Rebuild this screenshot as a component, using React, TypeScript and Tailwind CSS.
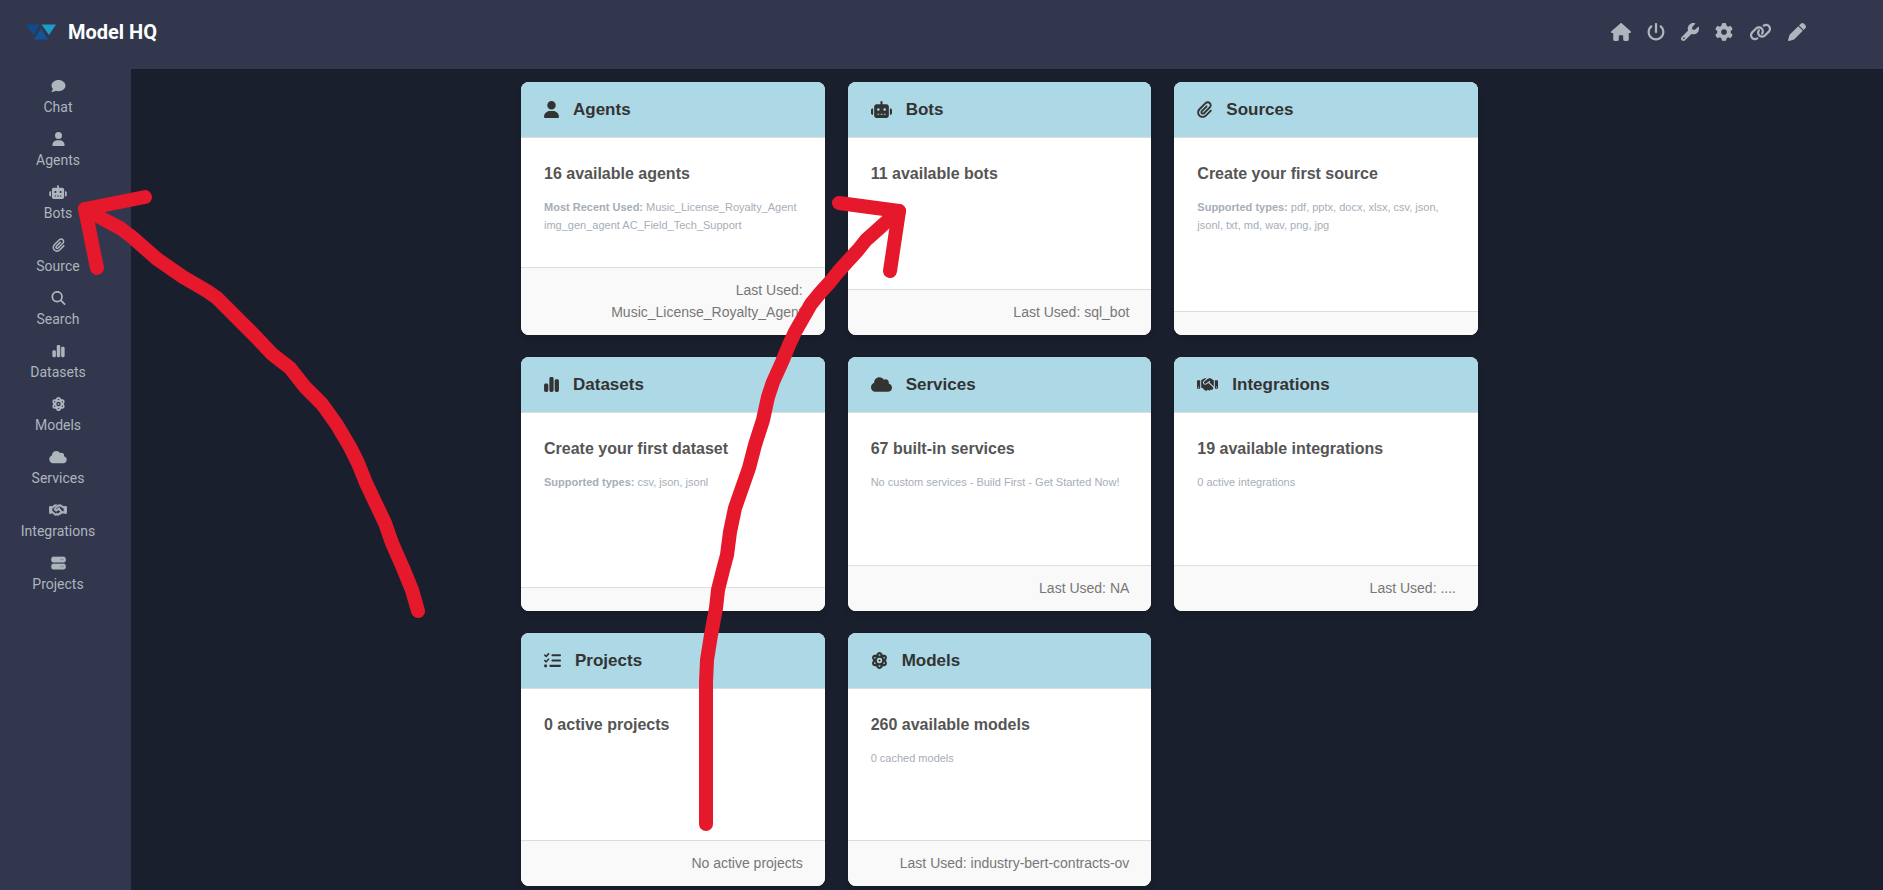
import type { ReactNode } from 'react'
import type { IconType } from 'react-icons'
import {
  FaAtom,
  FaChartSimple,
  FaCloud,
  FaComment,
  FaGear,
  FaHandshake,
  FaHouse,
  FaLink,
  FaListCheck,
  FaMagnifyingGlass,
  FaPaperclip,
  FaPen,
  FaPowerOff,
  FaRegHandshake,
  FaRobot,
  FaServer,
  FaUser,
  FaWrench,
} from 'react-icons/fa6'

const toolbar: { label: string; icon: IconType; width: string }[] = [
  { label: 'Home', icon: FaHouse, width: 'w-[20px]' },
  { label: 'Power', icon: FaPowerOff, width: 'w-[18px]' },
  { label: 'Tools', icon: FaWrench, width: 'w-[18px]' },
  { label: 'Settings', icon: FaGear, width: 'w-[18px]' },
  { label: 'Connections', icon: FaLink, width: 'w-[23px]' },
  { label: 'Edit', icon: FaPen, width: 'w-[18px]' },
]

const navItems: { label: string; icon: IconType; iconClass: string }[] = [
  { label: 'Chat', icon: FaComment, iconClass: 'w-[15px]' },
  { label: 'Agents', icon: FaUser, iconClass: 'w-[13px]' },
  { label: 'Bots', icon: FaRobot, iconClass: 'w-[18px]' },
  { label: 'Source', icon: FaPaperclip, iconClass: 'w-[13px]' },
  { label: 'Search', icon: FaMagnifyingGlass, iconClass: 'w-[15px]' },
  { label: 'Datasets', icon: FaChartSimple, iconClass: 'w-[13px]' },
  { label: 'Models', icon: FaAtom, iconClass: 'w-[15px]' },
  { label: 'Services', icon: FaCloud, iconClass: 'w-[18px]' },
  { label: 'Integrations', icon: FaRegHandshake, iconClass: 'w-[18px] stroke-[32]' },
  { label: 'Projects', icon: FaServer, iconClass: 'w-[15px] stroke-[20]' },
]

type CardData = {
  title: string
  icon: IconType
  iconWidth: string
  headline: string
  detail?: ReactNode
  footer?: string
}

const cards: CardData[] = [
  {
    title: 'Agents',
    icon: FaUser,
    iconWidth: 'w-[15px]',
    headline: '16 available agents',
    detail: (
      <>
        <b>Most Recent Used:</b> Music_License_Royalty_Agent img_gen_agent AC_Field_Tech_Support
      </>
    ),
    footer: 'Last Used: Music_License_Royalty_Agent',
  },
  {
    title: 'Bots',
    icon: FaRobot,
    iconWidth: 'w-[21px]',
    headline: '11 available bots',
    footer: 'Last Used: sql_bot',
  },
  {
    title: 'Sources',
    icon: FaPaperclip,
    iconWidth: 'w-[15px]',
    headline: 'Create your first source',
    detail: (
      <>
        <b>Supported types:</b> pdf, pptx, docx, xlsx, csv, json, jsonl, txt, md, wav, png, jpg
      </>
    ),
  },
  {
    title: 'Datasets',
    icon: FaChartSimple,
    iconWidth: 'w-[15px]',
    headline: 'Create your first dataset',
    detail: (
      <>
        <b>Supported types:</b> csv, json, jsonl
      </>
    ),
  },
  {
    title: 'Services',
    icon: FaCloud,
    iconWidth: 'w-[21px]',
    headline: '67 built-in services',
    detail: 'No custom services - Build First - Get Started Now!',
    footer: 'Last Used: NA',
  },
  {
    title: 'Integrations',
    icon: FaHandshake,
    iconWidth: 'w-[21px]',
    headline: '19 available integrations',
    detail: '0 active integrations',
    footer: 'Last Used: ....',
  },
  {
    title: 'Projects',
    icon: FaListCheck,
    iconWidth: 'w-[17px]',
    headline: '0 active projects',
    footer: 'No active projects',
  },
  {
    title: 'Models',
    icon: FaAtom,
    iconWidth: 'w-[17px]',
    headline: '260 available models',
    detail: '0 cached models',
    footer: 'Last Used: industry-bert-contracts-ov',
  },
]

function Logo() {
  return (
    <svg width="30" height="16" viewBox="0 0 30 16" aria-hidden="true">
      <path d="M0 .5h14L7.500 11z" fill="#0f4c8c" />
      <path d="M15 4.500L22 15.500H8z" fill="#10559a" />
      <path d="M15.500 .5H30l-7 10.500z" fill="#1b9cc9" />
    </svg>
  )
}

function Card({ title, icon: Icon, iconWidth, headline, detail, footer }: CardData) {
  return (
    <section className="flex flex-col overflow-hidden rounded-lg bg-white shadow-md">
      <div className="flex items-center gap-[14px] border-b border-[#ddd] bg-[#add8e6] py-[14px] pr-[22px] pl-[23px] text-[#333]">
        <Icon className={`h-[17px] ${iconWidth}`} />
        <h2 className="text-[17px] leading-[27px] font-bold">{title}</h2>
      </div>
      <div className="flex-1 pt-[23px] pr-[22px] pl-[23px]">
        <h3 className="text-base leading-[26px] font-bold text-[#555]">{headline}</h3>
        {detail && <p className="mt-[11px] text-[11px] leading-[18px] font-medium text-[#a6aeb7]">{detail}</p>}
      </div>
      <div className="border-t border-[#ddd] bg-[#f9f9f9] px-[22px] pt-[11px] pb-[12px] text-right text-sm leading-[22px] text-[#777]">
        {footer}
      </div>
    </section>
  )
}

export default function App() {
  return (
    <div className="relative flex min-h-screen flex-col bg-[#1a1f2d] font-['Liberation_Sans',sans-serif]">
      {/* Top bar */}
      <header className="flex h-[69px] items-center justify-between bg-[#32374d] pr-[77px] pb-[6px] pl-[26px]">
        <div className="flex items-center gap-3">
          <Logo />
          <h1 className="font-[Roboto,sans-serif] text-xl font-bold text-white">Model HQ</h1>
        </div>
        <div className="flex items-center gap-4">
          {toolbar.map(({ label, icon: Icon, width }) => (
            <button key={label} type="button" aria-label={label} className="text-[#adb5bd]">
              <Icon className={`h-[18px] ${width}`} />
            </button>
          ))}
        </div>
      </header>

      <div className="flex flex-1">
        {/* Sidebar */}
        <nav className="flex w-[131px] shrink-0 flex-col gap-[14px] bg-[#32374d] pt-[10px] pr-[15px]">
          {navItems.map(({ label, icon: Icon, iconClass }) => (
            <a
              key={label}
              href="#"
              className="flex flex-col items-center gap-[3px] font-[Roboto,sans-serif] text-sm leading-[22px] text-[#adb5bd]"
            >
              <Icon className={`h-[14px] ${iconClass}`} />
              {label}
            </a>
          ))}
        </nav>

        {/* Cards */}
        <main className="flex flex-1 justify-center pt-[13px] pr-[15px] pb-1">
          <div className="grid w-full max-w-[957px] auto-rows-fr grid-cols-3 gap-x-[23px] gap-y-[22px]">
            {cards.map((card) => (
              <Card key={card.title} {...card} />
            ))}
          </div>
        </main>
      </div>

      {/* Hand-drawn arrows pointing at the two Bots entries */}
      <svg
        className="pointer-events-none absolute inset-0 size-full"
        fill="none"
        stroke="#e5182c"
        strokeWidth="14"
        strokeLinecap="round"
        strokeLinejoin="round"
        aria-hidden="true"
      >
        <path d="M145 197L85 209L97 268" />
        <path d="M85 209L103 219L120 228L132 237L157 259L183 277L207 291L217 298L227 308L240 321L257 338L272 354L290 368L305 387L322 404L337 425L350 447L358 463L366 483L375 502L385 523L392 543L403 568L412 590L418 611" />
        <path d="M839 203L899 211L890 271" />
        <path d="M899 211L885 223L875 232L866 240L858 250L847 262L838 272L830 282L820 293L811 304L803 318L795 332L789 345L782 362L773 382L768 397L763 420L755 445L749 468L742 488L735 508L730 532L727 555L723 570L718 590L716 608L711 635L707 660L706 682L706 824" />
      </svg>
    </div>
  )
}
